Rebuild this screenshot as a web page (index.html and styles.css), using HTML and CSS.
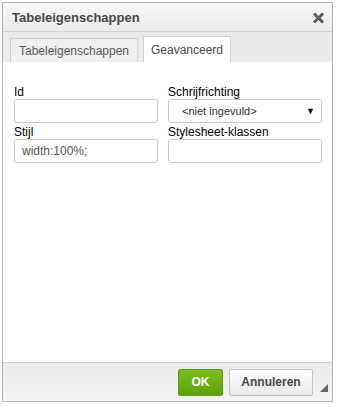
FILE: index.html
```html
<!DOCTYPE html>
<html>
<head>
<meta charset="utf-8">
<link rel="stylesheet" href="styles.css">
</head>
<body>
<div class="dialog">
  <div class="titlebar">
    <span class="title">Tabeleigenschappen</span>
    <span class="close"><svg width="13" height="12" viewBox="0 0 13 12"><path d="M2 1.5 L11 10.5 M11 1.5 L2 10.5" stroke="#5a5a5a" stroke-width="3" stroke-linecap="butt"/></svg></span>
  </div>
  <div class="tabs">
    <div class="tab">Tabeleigenschappen</div>
    <div class="tab active">Geavanceerd</div>
  </div>
  <div class="content">
    <div class="grid">
      <div class="field">
        <label class="label">Id</label>
        <div class="input"></div>
      </div>
      <div class="field">
        <label class="label">Schrijfrichting</label>
        <div class="input select"><span>&lt;niet ingevuld&gt;</span><span class="arrow">▼</span></div>
      </div>
      <div class="field">
        <label class="label">Stijl</label>
        <div class="input">width:100%;</div>
      </div>
      <div class="field">
        <label class="label">Stylesheet-klassen</label>
        <div class="input"></div>
      </div>
    </div>
  </div>
  <div class="footer">
    <div class="btn ok">OK</div>
    <div class="btn cancel">Annuleren</div>
    <span class="grip"></span>
  </div>
</div>
</body>
</html>
```
FILE: styles.css
```css
html, body {
  margin: 0;
  padding: 0;
  background: #fff;
}
body {
  font-family: "Liberation Sans", Arial, sans-serif;
  font-size: 12px;
  color: #000;
}
.dialog {
  margin: 2px 0 0 2px;
  width: 331px;
  height: 400px;
  box-sizing: border-box;
  border: 1px solid #b6b6b6;
  display: flex;
  flex-direction: column;
  background: #fff;
}
.titlebar {
  height: 28px;
  flex: none;
  display: flex;
  align-items: center;
  justify-content: space-between;
  padding: 0 7px 0 9px;
  background: linear-gradient(#f8f8f8, #ebebeb);
  border-bottom: 1px solid #d1d1d1;
}
.title {
  font-size: 13px;
  font-weight: bold;
  color: #474747;
}
.close {
  display: flex;
  margin-top: 1px;
}
.tabs {
  height: 30px;
  flex: none;
  background: #ebebeb;
  display: flex;
  align-items: flex-end;
  padding-left: 7px;
  gap: 5px;
}
.tab {
  height: 24px;
  box-sizing: border-box;
  padding: 0 8px 0 8px;
  border: 1px solid #d1d1d1;
  border-bottom: none;
  background: #f0f0f0;
  color: #595959;
  font-size: 12px;
  display: flex;
  align-items: center;
  padding-top: 1px;
}
.tab:first-child {
  width: 128px;
  justify-content: center;
}
.tab.active {
  height: 26px;
  width: 88px;
  background: #fff;
  color: #474747;
  justify-content: center;
  padding: 0;
}
.content {
  flex: 1;
  background: #fff;
  padding: 23px 10px 0 11px;
}
.grid {
  display: grid;
  grid-template-columns: 144px 154px;
  column-gap: 10px;
  row-gap: 2px;
}
.field {
  display: flex;
  flex-direction: column;
}
.label {
  font-size: 12px;
  line-height: 14px;
  height: 14px;
  color: #000;
}
.input {
  height: 24px;
  box-sizing: border-box;
  border: 1px solid #c9cccf;
  border-radius: 3px;
  background: #fff;
  font-size: 12px;
  color: #555;
  padding: 0 7px;
  display: flex;
  align-items: center;
}
.select {
  justify-content: space-between;
  padding: 0 6px 0 13px;
  color: #333;
  font-size: 11px;
}
.arrow {
  font-size: 9px;
  color: #000;
}
.footer {
  height: 38px;
  flex: none;
  border-top: 1px solid #d1d1d1;
  background: linear-gradient(#ebebeb, #f4f4f4);
  display: flex;
  align-items: center;
  justify-content: flex-end;
  padding-right: 19px;
  gap: 6px;
  position: relative;
}
.btn {
  height: 27px;
  box-sizing: border-box;
  border-radius: 2px;
  display: flex;
  align-items: center;
  justify-content: center;
  font-size: 12px;
  font-weight: bold;
}
.ok {
  width: 45px;
  background: linear-gradient(#7cbd1e, #5ea30c);
  border: 1px solid #5f9e15;
  color: #fff;
}
.cancel {
  width: 84px;
  background: linear-gradient(#fdfdfd, #ebebeb);
  border: 1px solid #c5c5c5;
  color: #474747;
}
.grip {
  position: absolute;
  right: 4px;
  bottom: 9px;
  width: 0;
  height: 0;
  border-left: 8px solid transparent;
  border-bottom: 8px solid #666;
}
```
